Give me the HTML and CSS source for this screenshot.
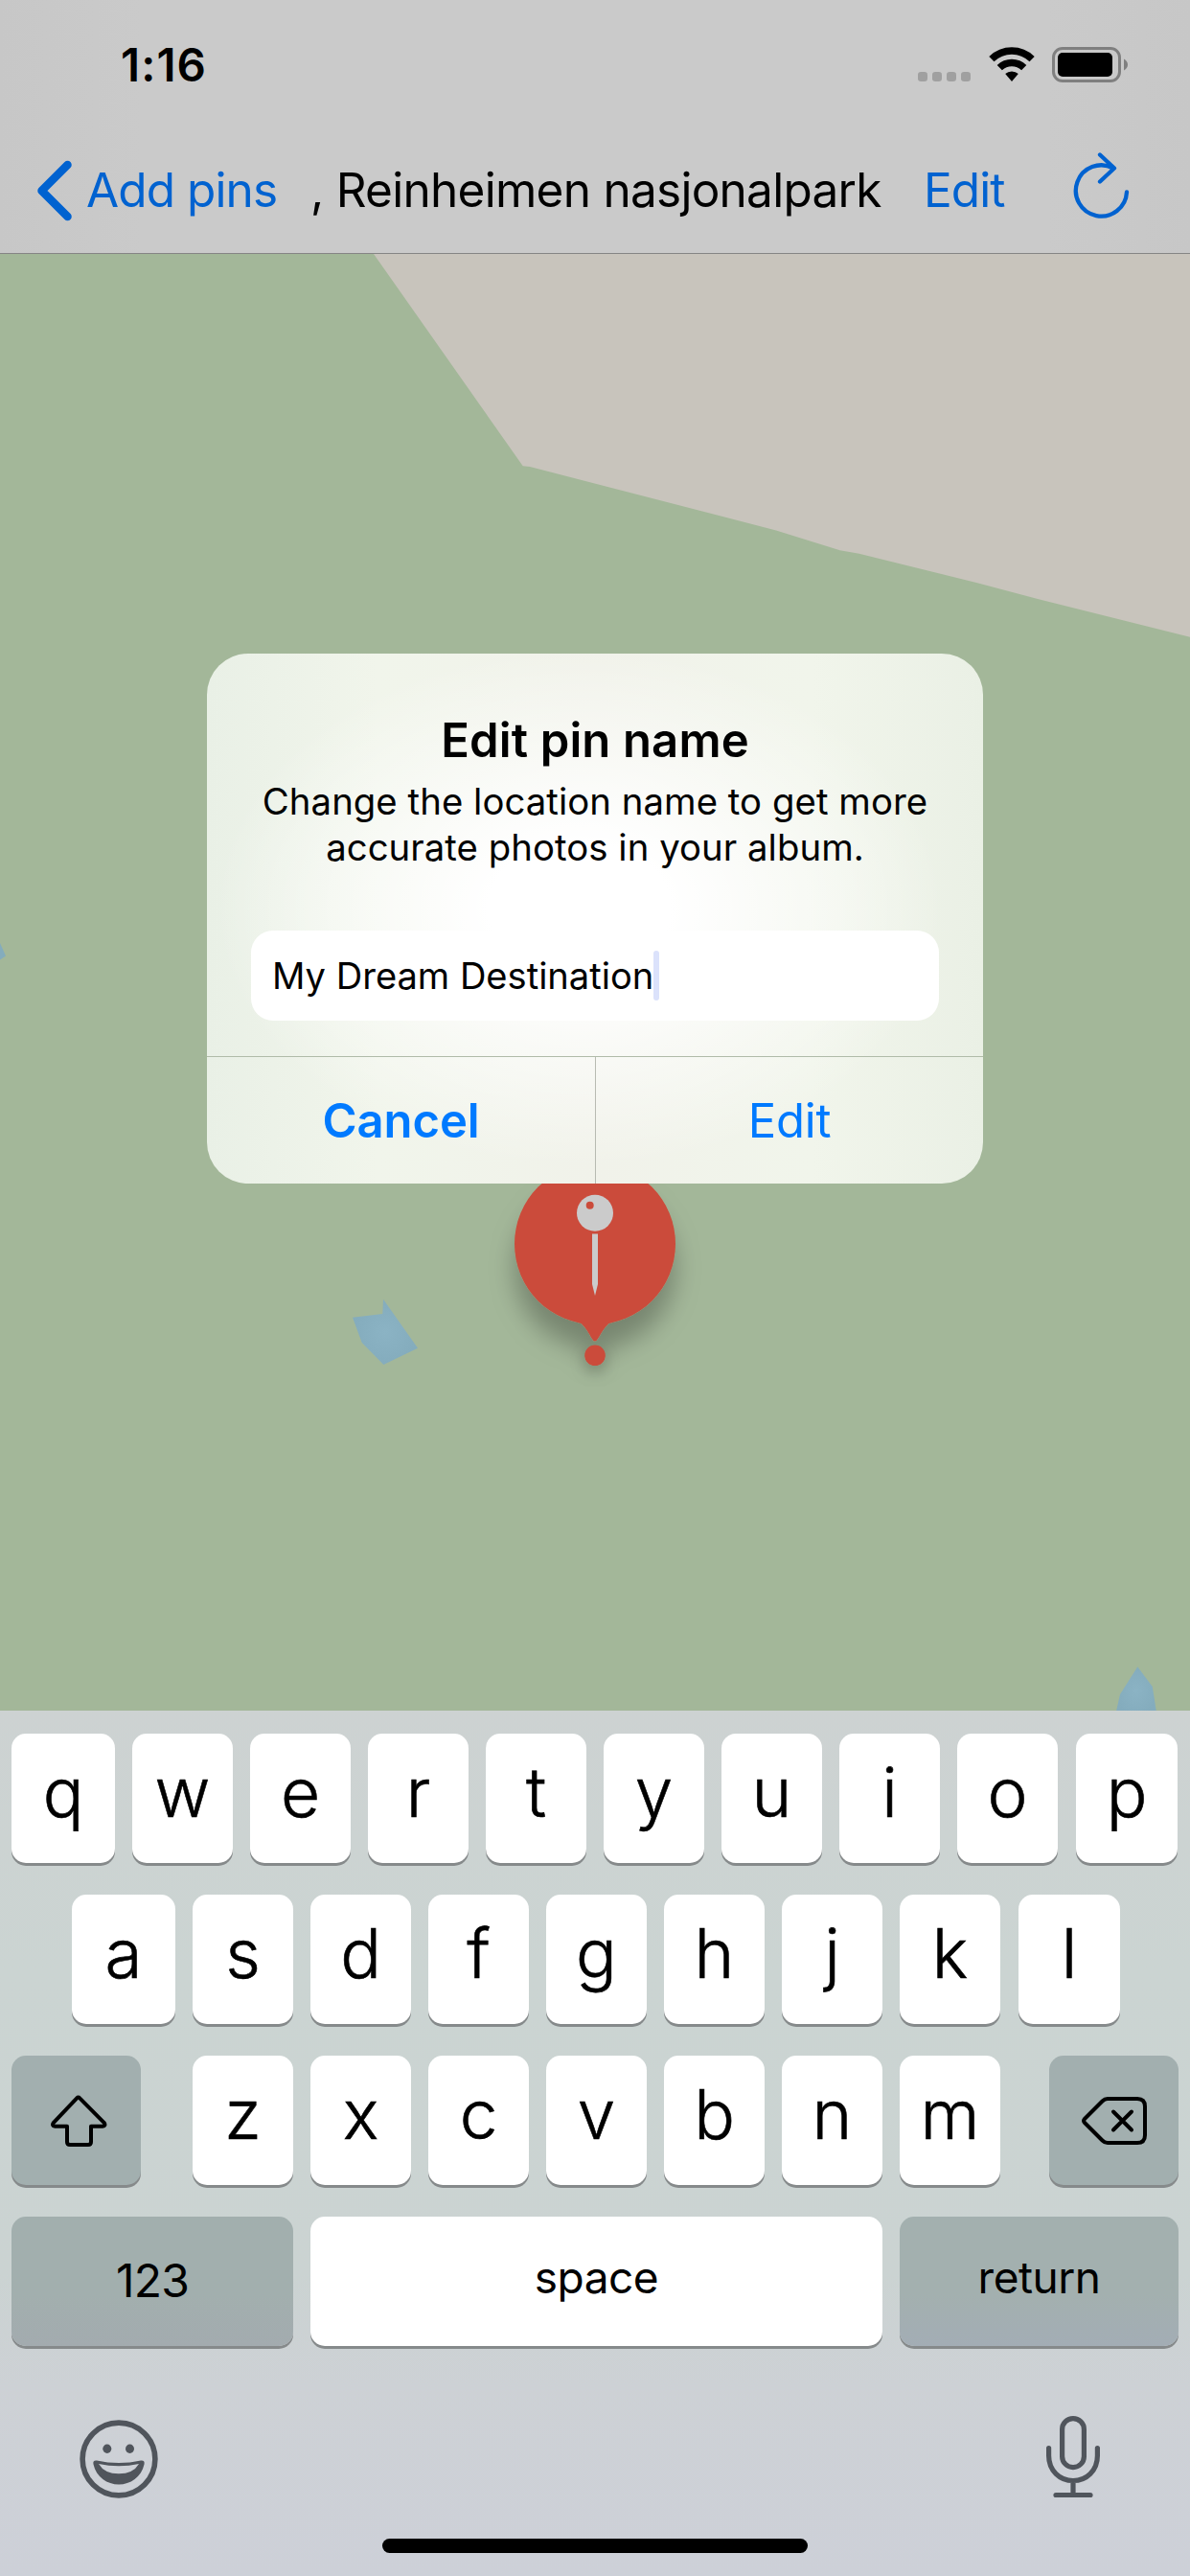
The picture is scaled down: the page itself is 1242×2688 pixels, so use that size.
FILE: index.html
```html
<!DOCTYPE html>
<html lang="en">
<head>
<meta charset="utf-8">
<title>Edit pin name</title>
<link rel="stylesheet" href="styles.css">
</head>
<body>
<div class="screen">
  <header class="header">
    <div class="status">
      <span class="time">1:16</span>
      <div class="status-icons">
        <svg class="signal" width="56" height="38" viewBox="0 0 56 38"><g fill="#a0a0a0"><rect x="0" y="26" width="10" height="10" rx="3.2"/><rect x="15" y="26" width="10" height="10" rx="3.2"/><rect x="30" y="26" width="10" height="10" rx="3.2"/><rect x="45" y="26" width="10" height="10" rx="3.2"/></g></svg>
        <svg class="wifi" width="48" height="38" viewBox="0 0 48 38"><path d="M.3 9.900a34 34 0 0 1 47.400 0l-5.200 5.400a26.500 26.500 0 0 0-37 0zM8.700 18.900a22 22 0 0 1 30.600 0l-5.200 5.400a14.500 14.500 0 0 0-20.200 0zM17.200 28.100a10 10 0 0 1 13.600 0l-6.800 8z"/></svg>
        <svg class="battery" width="80" height="38" viewBox="0 0 80 38"><rect x="1.500" y="1.500" width="69" height="34" rx="9.500" fill="none" stroke="#7f7f7f" stroke-width="3"/><rect x="6" y="6" width="57" height="25" rx="5"/><path d="M75 12.500q4 2.500 4 6t-4 6z" fill="#7f7f7f"/></svg>
      </div>
    </div>
    <nav class="nav">
      <svg class="chevron" width="38" height="64" viewBox="0 0 38 64"><path d="M33.500 5 6.500 32 33.500 59" fill="none" stroke="#0062d0" stroke-width="8.500" stroke-linecap="round" stroke-linejoin="round"/></svg>
      <a class="back">Add pins</a>
      <h1 class="title">, Reinheimen nasjonalpark</h1>
      <a class="edit">Edit</a>
      <svg class="refresh" width="60" height="72" viewBox="0 0 60 72"><g fill="none" stroke="#0062d0" stroke-width="4.300" stroke-linecap="round" stroke-linejoin="round"><path d="M56 42.300A26.600 26.600 0 1 1 42 17.500M28 3.500 43 17.500 28 31.500"/></g></svg>
    </nav>
  </header>

  <main class="map">
    <svg class="terrain" width="1242" height="1520" viewBox="0 265 1242 1520">
      <defs>
        <radialGradient id="water"><stop offset="0" stop-color="#8bb3c4"/><stop offset="1" stop-color="#84acbd"/></radialGradient>
        <filter id="shade" x="-50%" y="-50%" width="200%" height="200%"><feDropShadow dx="0" dy="25" stdDeviation="13" flood-color="#000" flood-opacity=".27"/></filter>
        <filter id="dot-shade" x="-150%" y="-150%" width="400%" height="400%"><feDropShadow dx="0" dy="7" stdDeviation="8" flood-color="#000" flood-opacity=".22"/></filter>
      </defs>
      <path d="M390 265 545.700 486.300 553 487 810 553.500 876.700 574.300 896.700 577.700 1020 608.300 1083 625 1242 664.700V265z" fill="#c8c4bc"/>
      <path d="M0 984 6 997.500 0 1001.500z" fill="#84acbd"/>
      <path d="M400 1355.700 436 1406.700 400.300 1424 377.700 1401 368 1374.700 399.300 1371z" fill="url(#water)"/>
      <path d="M1187.300 1739.300 1202.800 1760 1207.500 1790H1164L1169 1768z" fill="url(#water)"/>
      <g filter="url(#shade)" fill="#cb4b3a">
        <circle cx="621" cy="1298" r="84"/>
        <path d="M636.500 1380C627 1388 624.500 1399.500 621 1399.500S615 1388 605.500 1380z"/>
      </g>
      <circle filter="url(#dot-shade)" fill="#cb4b3a" cx="621" cy="1414.300" r="10.800"/>
      <g fill="#cbcbcb"><circle cx="621" cy="1265.700" r="19"/><path d="M618 1287.500h6V1340l-3 12-3-12z"/></g>
      <circle cx="615.700" cy="1257.700" r="4" fill="#cb4b3a"/>
    </svg>

    <section class="dialog">
      <div class="dialog-body">
        <h2 class="dialog-title">Edit pin name</h2>
        <p class="message">Change the location name to get more<br>accurate photos in your album.</p>
        <div class="field"><span class="value">My Dream Destination</span><span class="caret"></span></div>
      </div>
      <div class="actions">
        <button class="action cancel">Cancel</button>
        <button class="action confirm">Edit</button>
      </div>
    </section>
  </main>

  <section class="keyboard">
    <div class="row row-one">
      <span class="key">q</span><span class="key">w</span><span class="key">e</span><span class="key">r</span><span class="key">t</span><span class="key">y</span><span class="key">u</span><span class="key">i</span><span class="key">o</span><span class="key">p</span>
    </div>
    <div class="row row-two">
      <span class="key">a</span><span class="key">s</span><span class="key">d</span><span class="key">f</span><span class="key">g</span><span class="key">h</span><span class="key">j</span><span class="key">k</span><span class="key">l</span>
    </div>
    <div class="row row-three">
      <span class="key dark"><svg width="64" height="56" viewBox="0 0 64 56"><path d="M32.200 4.300q1.500-1.600 3 0L60.500 29.800q2.500 3.400-1.500 3.900H47V50q0 3-3 3H25q-3 0-3-3V33.700H9.500q-4-.5-1.500-3.900z" fill="none" stroke="#000" stroke-width="4" stroke-linejoin="round"/></svg></span>
      <span class="key">z</span><span class="key">x</span><span class="key">c</span><span class="key">v</span><span class="key">b</span><span class="key">n</span><span class="key">m</span>
      <span class="key dark"><svg width="70" height="54" viewBox="0 0 70 54"><path d="M28 4H59q8 0 8 8V42q0 8-8 8H28q-3 0-5.500-2.500L4 29q-2-2 0-4L22.500 6.500Q25 4 28 4zM34 17.500 53 36.500M53 17.500 34 36.500" fill="none" stroke="#000" stroke-width="4" stroke-linecap="round" stroke-linejoin="round"/></svg></span>
    </div>
    <div class="row row-four">
      <span class="key dark label digits">123</span><span class="key label space">space</span><span class="key dark label return">return</span>
    </div>
    <div class="tools">
      <svg width="82" height="82" viewBox="0 0 82 82"><circle cx="41" cy="41" r="37.900" fill="none" stroke="#50555c" stroke-width="5.600"/><g fill="#50555c"><ellipse cx="28.800" cy="30.300" rx="4.500" ry="4.700"/><ellipse cx="52.500" cy="30.300" rx="4.500" ry="4.700"/><path fill-rule="evenodd" d="M18 42.500Q41 47.500 64 42.500 68.500 42 67.500 46.500C64.500 60 53 67.500 41 67.500S17.500 60 14.500 46.500Q13.500 42 18 42.500ZM20 46Q26 56.300 41 56.300T62 46Q41 50.500 20 46Z"/></g></svg>
      <svg width="60" height="88" viewBox="0 0 60 88"><g fill="none" stroke="#50555c" stroke-width="5.200" stroke-linecap="round"><rect x="18.600" y="4.600" width="22.800" height="51" rx="11.400"/><path d="M4.600 35.500v8C4.600 59 16 69.500 30 69.500S55.400 59 55.400 43.500V35.500M30 70V84M12 84.500H48"/></g></svg>
    </div>
    <div class="home"></div>
  </section>
</div>
</body>
</html>
```
FILE: styles.css
```css
* { box-sizing: border-box; }
body { margin: 0; font-family: Inter, "Liberation Sans", sans-serif; color: #000; }
h1, h2, p { margin: 0; font-weight: 400; }
svg { display: block; flex: none; }
.screen { width: 1242px; height: 2688px; display: flex; flex-direction: column; overflow: hidden; }

.header { height: 265px; border-bottom: 1px solid #858585; background: linear-gradient(90deg, #c7c7c7, #cacaca 12%, #cacaca 88%, #c7c7c7); white-space: nowrap; }
.status { height: 132px; padding: 39px 65px 0 126px; display: flex; justify-content: space-between; }
.time { font-size: 47.500px; line-height: 58px; font-weight: 600; letter-spacing: 1.100px; }
.status-icons { display: flex; padding-top: 10px; }
.wifi { margin-left: 17.500px; }
.battery { margin-left: 18.500px; margin-right: -1px; }
.nav { height: 132px; display: grid; grid-template-columns: 53px 234px 640px 156px 60px; padding-left: 37px; align-items: start; }
.chevron { margin-top: 34.500px; }
.back, .title, .edit { font-size: 49.500px; line-height: 60px; margin-top: 36px; letter-spacing: -.9px; }
.title { letter-spacing: -.73px; }
.back, .edit { color: #0062d0; }
.refresh { margin-top: 26px; }

.map { height: 1520px; background: #a3b799; display: grid; justify-items: center; }
.terrain, .dialog { grid-area: 1 / 1; }
.dialog { position: relative; margin-top: 417px; width: 810px; height: 553px; border-radius: 43px; overflow: hidden; display: flex; flex-direction: column;
  background: radial-gradient(ellipse 380px 270px at 48% 48%, #fff 25%, rgba(255,255,255,0) 100%), linear-gradient(90deg, #e9f0e6, #f1f5eb 22%, #f1f2ea 50%, #f1f5eb 78%, #eaf0e5); }
.dialog-body { height: 420px; padding: 61px 46px 0; }
.dialog-title { font-size: 49px; line-height: 60px; font-weight: 600; text-align: center; letter-spacing: .15px; }
.message { font-size: 38.300px; line-height: 48px; text-align: center; white-space: nowrap; margin-top: 9px; letter-spacing: .06px; }
.field { margin-top: 63px; height: 94px; border-radius: 23px; background: #fff; padding-left: 22px; display: flex; align-items: center; font-size: 38.100px; white-space: nowrap; width: 718px; }
.value { margin-top: -1px; }
.caret { width: 6px; height: 52px; border-radius: 3px; background: #dbe2fb; }
.actions { flex: 1; border-top: 1px solid #b0bba9; display: grid; grid-template-columns: 406px 404px; }
.action { border: 0; background: none; padding: 2px 0 0; color: #007aff; font: 400 49px/60px Inter, "Liberation Sans", sans-serif; }
.cancel { border-right: 1px solid #b8bbb2; font-weight: 600; letter-spacing: -.1px; }
.confirm { letter-spacing: -.2px; }

.keyboard { height: 903px; padding: 24px 12px 0; background: linear-gradient(180deg, #cdd2d2, #cbd4d2 30%, #cbd3d2 65%, #cdd1d5 78%, #cdd0d8); }
.row { display: flex; gap: 18px; height: 135px; margin-bottom: 33px; }
.key { width: 105px; flex: none; height: 135px; background: #fff; border-radius: 15px; box-shadow: 0 3px #868a8b; display: flex; justify-content: center; font-size: 71px; line-height: 122px; font-weight: 300; -webkit-text-stroke: .6px #000; }
.row-one .key:first-child, .row-two .key:first-child { width: 108px; }
.row-one .key:last-child, .row-two .key:last-child { width: 106px; margin-left: 1px; }
.row-two { padding-left: 63px; }
.dark { background: #a2afaf; align-items: center; }
.row-three .dark { width: 135px; }
.row-three .dark:first-child { margin-right: 36px; }
.row-three .dark:last-child { margin-left: 33px; }
.label { font-size: 46px; font-weight: 400; line-height: 127px; align-items: flex-start; letter-spacing: -.5px; -webkit-text-stroke: 0; }
.digits { width: 294px; line-height: 134px; font-size: 48px; letter-spacing: -.8px; background: linear-gradient(#a2afae 60%, #a3abaf); }
.space { width: 597px; }
.return { width: 291px; background: linear-gradient(#a3b0af 60%, #a3adb5); }
.tools { display: flex; justify-content: space-between; align-items: flex-start; padding: 44px 80px 0 71px; height: 168px; }
.tools svg:last-child { margin-top: -6px; }
.home { width: 444px; height: 15px; border-radius: 8px; background: #000; margin: 0 auto; }
```
